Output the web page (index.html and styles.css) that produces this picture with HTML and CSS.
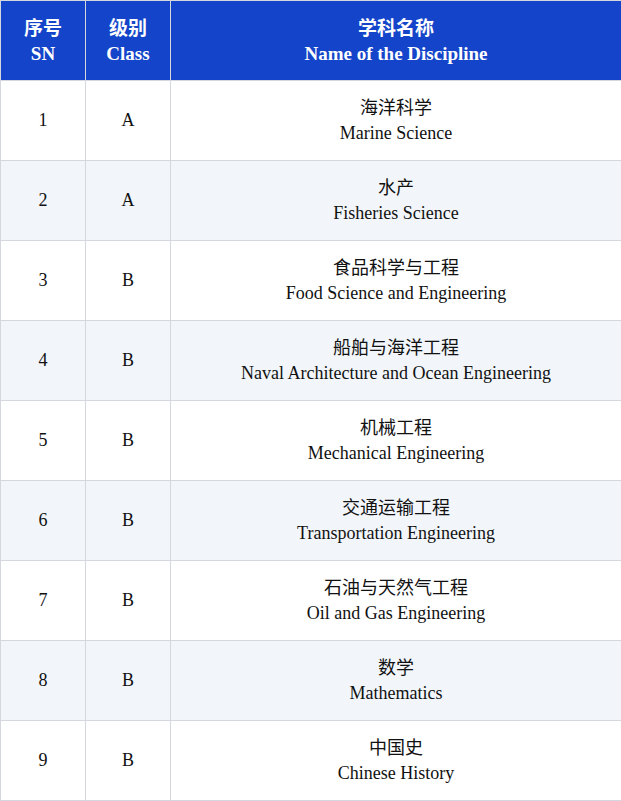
FILE: index.html
```html
<!DOCTYPE html>
<html>
<head>
<meta charset="utf-8">
<link rel="stylesheet" href="styles.css">
</head>
<body>
<table class="tbl">
  <colgroup><col class="c1"><col class="c2"><col class="c3"></colgroup>
  <thead>
    <tr class="head">
      <th>序号<br>SN</th>
      <th>级别<br>Class</th>
      <th>学科名称<br>Name of the Discipline</th>
    </tr>
  </thead>
  <tbody>
    <tr><td>1</td><td>A</td><td>海洋科学<br>Marine Science</td></tr>
    <tr class="alt"><td>2</td><td>A</td><td>水产<br>Fisheries Science</td></tr>
    <tr><td>3</td><td>B</td><td>食品科学与工程<br>Food Science and Engineering</td></tr>
    <tr class="alt"><td>4</td><td>B</td><td>船舶与海洋工程<br>Naval Architecture and Ocean Engineering</td></tr>
    <tr><td>5</td><td>B</td><td>机械工程<br>Mechanical Engineering</td></tr>
    <tr class="alt"><td>6</td><td>B</td><td>交通运输工程<br>Transportation Engineering</td></tr>
    <tr><td>7</td><td>B</td><td>石油与天然气工程<br>Oil and Gas Engineering</td></tr>
    <tr class="alt"><td>8</td><td>B</td><td>数学<br>Mathematics</td></tr>
    <tr><td>9</td><td>B</td><td>中国史<br>Chinese History</td></tr>
  </tbody>
</table>
</body>
</html>
```
FILE: styles.css
```css
html, body { margin: 0; padding: 0; background: #fff; }
.tbl {
  border-collapse: collapse;
  width: 621px;
  table-layout: fixed;
  font-family: "Liberation Serif", "Times New Roman", "Noto Sans CJK SC", serif;
  font-size: 18px;
  line-height: 25px;
  color: #111;
}
.c1 { width: 85px; }
.c2 { width: 85px; }
.c3 { width: 451px; }
.tbl th, .tbl td {
  border: 1px solid #d4d7de;
  text-align: center;
  vertical-align: middle;
  padding: 0;
  height: 80px;
  box-sizing: border-box;
  font-family: "Liberation Serif", "Times New Roman", "Noto Sans CJK SC", serif;
}
.head th {
  background: #1444c9;
  color: #fff;
  font-weight: bold;
  font-size: 19px;
  line-height: 25px;
}
.alt td { background: #f2f6fb; }
```
